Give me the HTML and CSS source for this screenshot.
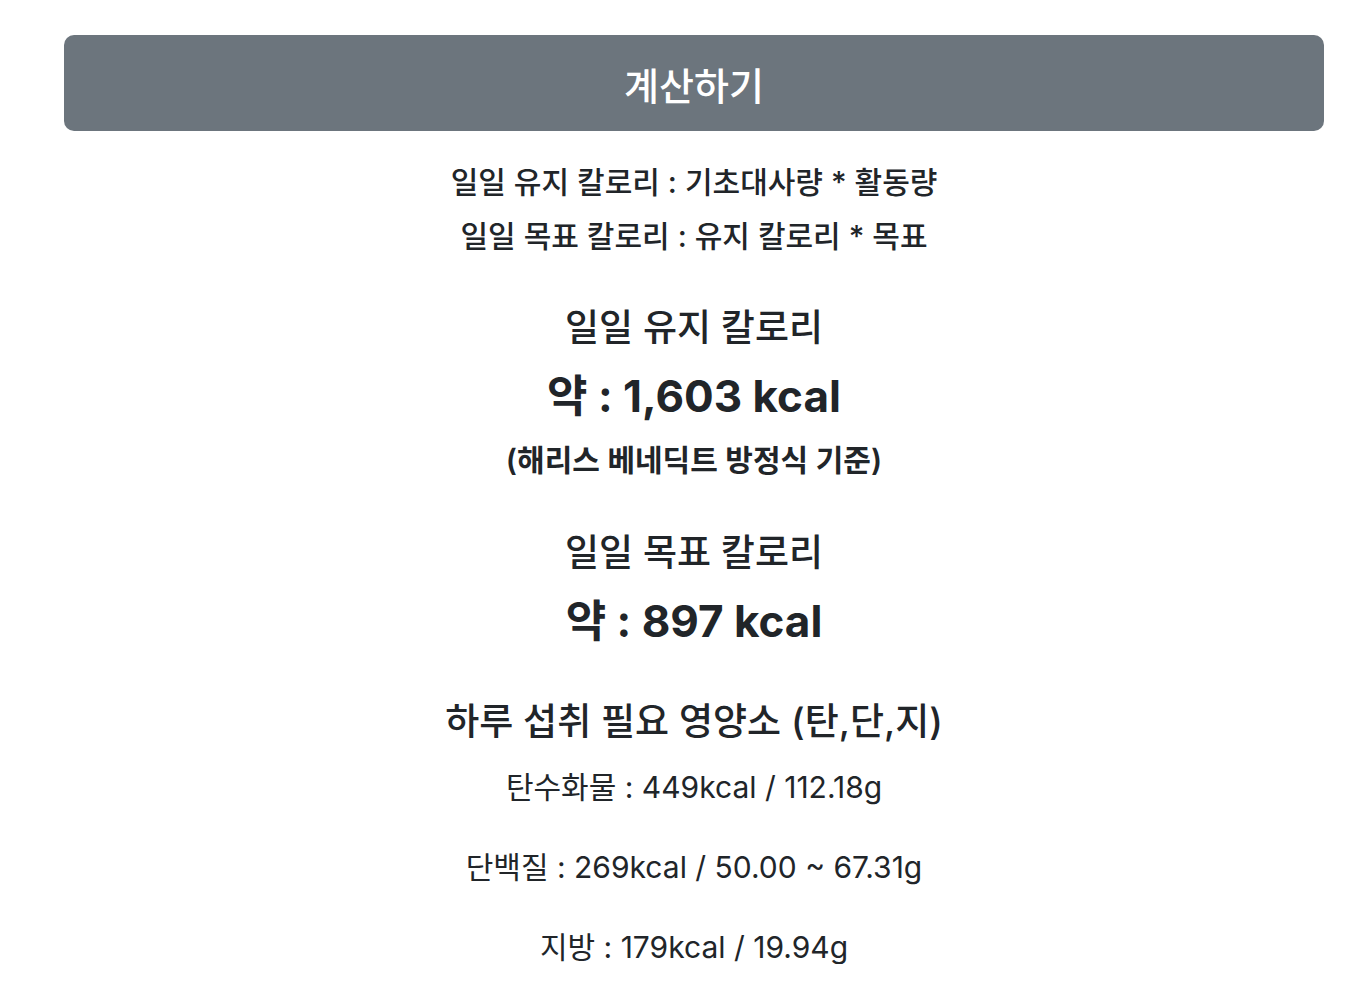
FILE: index.html
```html
<!DOCTYPE html>
<html lang="ko">
<head>
    <meta charset="UTF-8">
    <meta name="viewport" content="width=device-width, initial-scale=1.0">
    <title>칼로리 계산기</title>
    <link rel="stylesheet" href="styles.css">
</head>
<body>
    <div class="container">
        <button class="calc-btn" type="button">계산하기</button>

        <div class="formula">
            <p>일일 유지 칼로리 : 기초대사량 * 활동량</p>
            <p>일일 목표 칼로리 : 유지 칼로리 * 목표</p>
        </div>

        <div class="result">
            <h3 class="result-title">일일 유지 칼로리</h3>
            <p class="result-kcal">약 : 1,603 kcal</p>
            <p class="result-note">(해리스 베네딕트 방정식 기준)</p>
        </div>

        <div class="result">
            <h3 class="result-title">일일 목표 칼로리</h3>
            <p class="result-kcal">약 : 897 kcal</p>
        </div>

        <div class="nutrients">
            <h3 class="result-title">하루 섭취 필요 영양소 (탄,단,지)</h3>
            <p class="nutrient">탄수화물 : 449kcal / 112.18g</p>
            <p class="nutrient">단백질 : 269kcal / 50.00 ~ 67.31g</p>
            <p class="nutrient">지방 : 179kcal / 19.94g</p>
        </div>
    </div>
</body>
</html>
```

FILE: styles.css
```css
body {
    margin: 0;
    font-family: Inter, "Noto Sans CJK KR", sans-serif;
    color: #212529;
    background-color: #fff;
    text-align: center;
}

.container {
    padding: 35px 38px 0 64px;
}

.calc-btn {
    display: block;
    width: 100%;
    height: 96px;
    border: none;
    border-radius: 10px;
    background-color: #6c757d;
    color: #fff;
    font-family: inherit;
    font-size: 38px;
    font-weight: 500;
    cursor: pointer;
}

.formula {
    margin-top: 24px;
}

.formula p {
    margin: 0;
    font-size: 30px;
    font-weight: 500;
    line-height: 54px;
}

.result {
    margin-top: 44px;
}

.result + .result {
    margin-top: 56px;
}

.result-title {
    margin: 0;
    font-size: 37px;
    font-weight: 500;
    line-height: 41px;
}

.result-kcal {
    margin: 22px 0 0;
    font-size: 44px;
    font-weight: 700;
    line-height: 53px;
}

.result-note {
    margin: 22px 0 0;
    font-size: 30px;
    font-weight: 600;
    line-height: 31px;
}

.nutrients {
    margin-top: 53px;
}

.nutrient {
    margin: 28px 0 0;
    font-size: 30px;
    line-height: 34px;
}

.nutrient + .nutrient {
    margin-top: 46px;
}
```
